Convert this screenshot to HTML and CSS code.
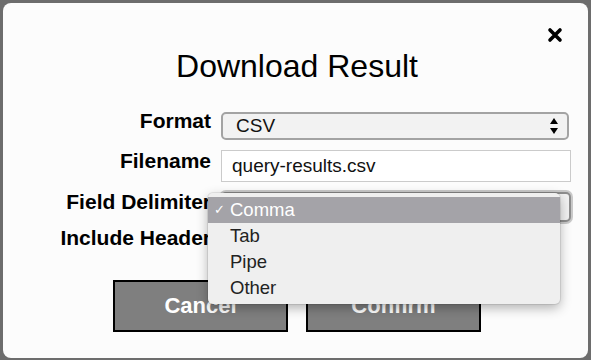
FILE: index.html
```html
<!DOCTYPE html>
<html lang="en">
<head>
  <meta charset="UTF-8" />
  <meta name="viewport" content="width=device-width, initial-scale=1.0" />
  <title>Download Result</title>
  <link rel="stylesheet" href="styles.css">
</head>
<body>
  <div class="modal">
    <button class="close" aria-label="Close">
      <svg width="16" height="16" viewBox="0 0 16 16">
        <path d="M3 3 L13 13 M13 3 L3 13" stroke="#000" stroke-width="3.6" stroke-linecap="round" />
      </svg>
    </button>

    <h1 class="title">Download Result</h1>

    <div class="form">
      <div class="row row-format">
        <label>Format</label>
        <div class="select select-format">
          <span>CSV</span>
          <svg class="arrows" width="8" height="16" viewBox="0 0 8 16">
            <polygon points="4,0 8,6 0,6" fill="#000" />
            <polygon points="0,10 8,10 4,16" fill="#000" />
          </svg>
        </div>
      </div>
      <div class="row row-name">
        <label>Filename</label>
        <div class="input">query-results.csv</div>
      </div>
      <div class="row row-delim">
        <label>Field Delimiter</label>
        <!-- open select: the menu covers the current value -->
        <div class="select select-delim">
          <ul class="menu">
            <li class="active"><span class="check">✓</span>Comma</li>
            <li>Tab</li>
            <li>Pipe</li>
            <li>Other</li>
          </ul>
        </div>
      </div>
      <div class="row row-header">
        <label>Include Header</label>
        <input type="checkbox" class="checkbox" checked>
      </div>
    </div>

    <div class="actions">
      <button class="btn">Cancel</button>
      <button class="btn">Confirm</button>
    </div>
  </div>
</body>
</html>
```

FILE: styles.css
```css
* {
  box-sizing: border-box;
}
body {
  margin: 0;
  background: #6d6d6d;
  font-family: 'Liberation Sans', Arial, Helvetica, sans-serif;
  overflow: hidden;
}
.modal {
  position: relative;
  margin: 3px;
  width: 585px;
  height: 355px;
  padding-top: 45px;
  background: #fcfcfc;
  border-radius: 8px;
}
.close {
  position: absolute;
  top: 24px;
  right: 25px;
  padding: 0;
  border: none;
  background: none;
  width: 16px;
  height: 16px;
}
.close svg {
  display: block;
}
.title {
  margin: 0;
  font-size: 32px;
  line-height: 37px;
  font-weight: normal;
  text-align: center;
  color: #000;
  padding-left: 3px;
}
.form {
  margin-top: 24px;
}
.row {
  display: grid;
  grid-template-columns: 208px 350px;
  column-gap: 10px;
  align-items: start;
}
.row label {
  text-align: right;
  font-weight: bold;
  font-size: 21px;
  line-height: 24px;
  color: #000;
  white-space: nowrap;
}
.row-format { height: 40px; }
.row-name { height: 41px; }
.row-delim { height: 36px; }
.row-header { height: 30px; }

.select {
  position: relative;
  display: flex;
  align-items: center;
  padding-left: 13px;
  font-size: 19px;
  color: #111;
  background: #f2f2f2;
  border: 2px solid #a3a3a3;
  border-radius: 5px;
}
.select-format {
  margin-top: 3px;
  width: 348px;
  height: 28px;
}
.arrows {
  position: absolute;
  right: 9px;
  top: 4px;
}
.input {
  margin-top: 1px;
  height: 32px;
  padding-left: 10px;
  font-size: 19px;
  line-height: 30px;
  color: #111;
  background: #fff;
  border: 1px solid #cbcbcb;
}
.select-delim {
  margin-top: 2px;
  height: 30px;
  border-color: #8e8e8e;
  box-shadow: 0 0 0 2px rgba(140, 140, 140, 0.45);
}
.menu {
  position: absolute;
  z-index: 5;
  left: -15px;
  top: -1px;
  width: 352px;
  margin: 0;
  padding: 4px 0 3px;
  list-style: none;
  background: #efefef;
  border-radius: 5px;
  box-shadow: 0 4px 12px rgba(0, 0, 0, 0.3), 0 0 0 1px rgba(0, 0, 0, 0.08);
}
.menu li {
  position: relative;
  height: 26px;
  line-height: 26px;
  padding-left: 22px;
  font-size: 18.5px;
  color: #222;
}
.menu li.active {
  background: #a4a3a8;
  color: #fff;
}
.menu .check {
  position: absolute;
  left: 6px;
  font-size: 13px;
}
.checkbox {
  margin: 8px 0 0;
}
.actions {
  display: flex;
  justify-content: center;
  gap: 18px;
  margin-top: 24px;
  padding-left: 3px;
}
.btn {
  width: 175px;
  height: 52px;
  border: 2px solid #000;
  background: #7f7f7f;
  color: #fff;
  font-family: 'Liberation Sans', Arial, Helvetica, sans-serif;
  font-weight: bold;
  font-size: 22px;
}
```
